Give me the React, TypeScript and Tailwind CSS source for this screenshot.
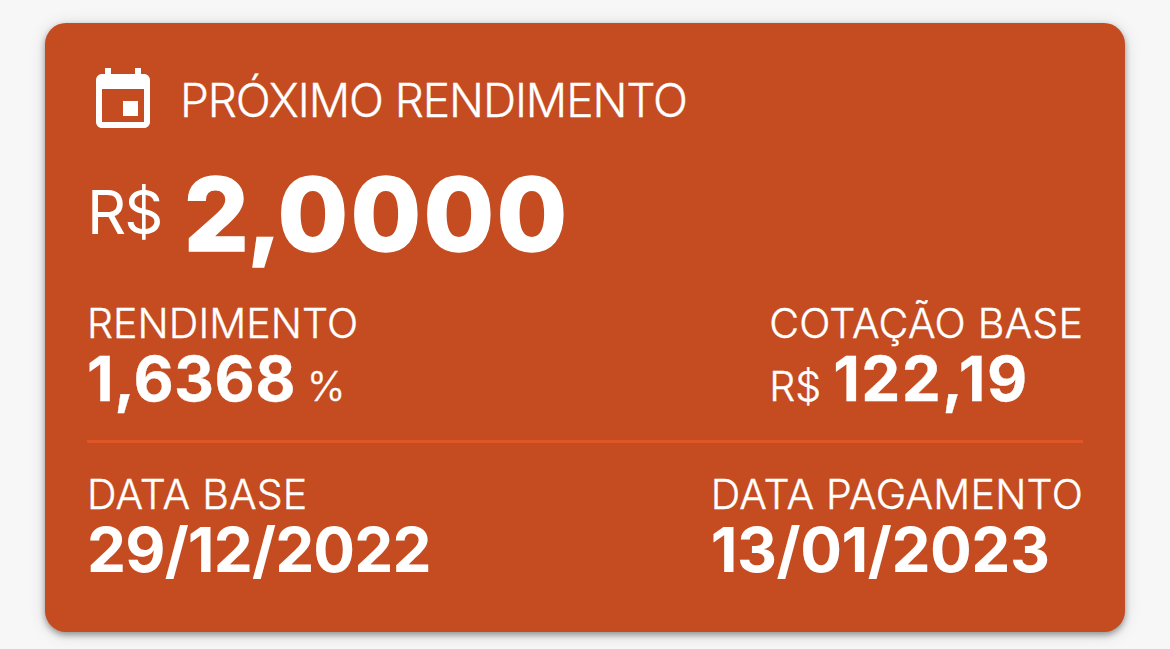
function DateValue({ day, month, year, spacing }: { day: string; month: string; year: string; spacing: string }) {
  return (
    <p className={`text-[62px] leading-[62px] font-bold ${spacing}`}>
      {day}/{month}/{year}
    </p>
  );
}

export default function App() {
  return (
    <main className="flex h-[649px] w-[1170px] overflow-hidden bg-[#f7f7f7] px-[45px] pt-[23px] font-['Inter',sans-serif] text-white">
      <section className="h-[609px] w-[1080px] rounded-[21px] bg-[#c44c20] px-[42px] whitespace-nowrap shadow-[0_3px_6px_rgba(0,0,0,0.36),0_2px_18px_rgba(0,0,0,0.12)]">
        <header className="flex h-[155px] items-center gap-[21px] pt-px">
          <svg viewBox="0 0 24 24" className="h-[72px] w-[72px]" fill="currentColor">
            <path d="M17 12h-5v5h5v-5zM16 1v2H8V1H6v2H5c-1.11 0-1.99.9-1.99 2L3 19c0 1.1.89 2 2 2h14c1.1 0 2-.9 2-2V5c0-1.1-.9-2-2-2h-1V1h-2zm3 18H5V8h14v11z" />
          </svg>
          <h1 className="pb-[3px] text-[46px] leading-none font-light tracking-[-1.1px] [-webkit-text-stroke:0.3px_white]">PRÓXIMO RENDIMENTO</h1>
        </header>
        <div className="flex h-[72px] items-start gap-[22.5px]">
          <span className="text-[61px] leading-[68px] font-normal tracking-[-2px]">R$</span>
          <strong className="flex text-[101.5px] leading-[72px] font-extrabold [-webkit-text-stroke:1.4px_white]">
            <span>2</span>
            <span className="-mr-[3px] -ml-[1px] text-[94px]">,</span>
            <span className="tracking-[2.8px]">0000</span>
          </strong>
        </div>
        <div className="mt-[48px] flex h-[145px] justify-between border-b-[3px] border-[#e05528]">
          <div>
            <p className="text-[41px] leading-[50px] font-light tracking-[0.1px] [-webkit-text-stroke:0.4px_white]">RENDIMENTO</p>
            <p className="flex items-baseline gap-[11px]">
              <strong className="text-[62px] leading-[62px] font-bold tracking-[0.4px] [-webkit-text-stroke:0.3px_white]">1,6368</strong>
              <span className="text-[41px] leading-none font-light [-webkit-text-stroke:0.4px_white]">%</span>
            </p>
          </div>
          <div>
            <p className="text-[41px] leading-[50px] font-light tracking-[0.2px] [-webkit-text-stroke:0.4px_white]">COTAÇÃO BASE</p>
            <p className="flex items-baseline gap-[12px]">
              <span className="text-[41px] leading-none font-light [-webkit-text-stroke:0.4px_white]">R$</span>
              <strong className="text-[62px] leading-[62px] font-bold tracking-[1.4px] [-webkit-text-stroke:0.3px_white]">122,19</strong>
            </p>
          </div>
        </div>
        <div className="flex justify-between pt-[26px]">
          <div>
            <p className="text-[41px] leading-[50px] font-light tracking-[0.2px] [-webkit-text-stroke:0.4px_white]">DATA BASE</p>
            <DateValue day="29" month="12" year="2022" spacing="tracking-[-0.85px]" />
          </div>
          <div>
            <p className="text-[41px] leading-[50px] font-light tracking-[0.25px] [-webkit-text-stroke:0.4px_white]">DATA PAGAMENTO</p>
            <DateValue day="13" month="01" year="2023" spacing="tracking-[-0.45px]" />
          </div>
        </div>
      </section>
    </main>
  );
}
